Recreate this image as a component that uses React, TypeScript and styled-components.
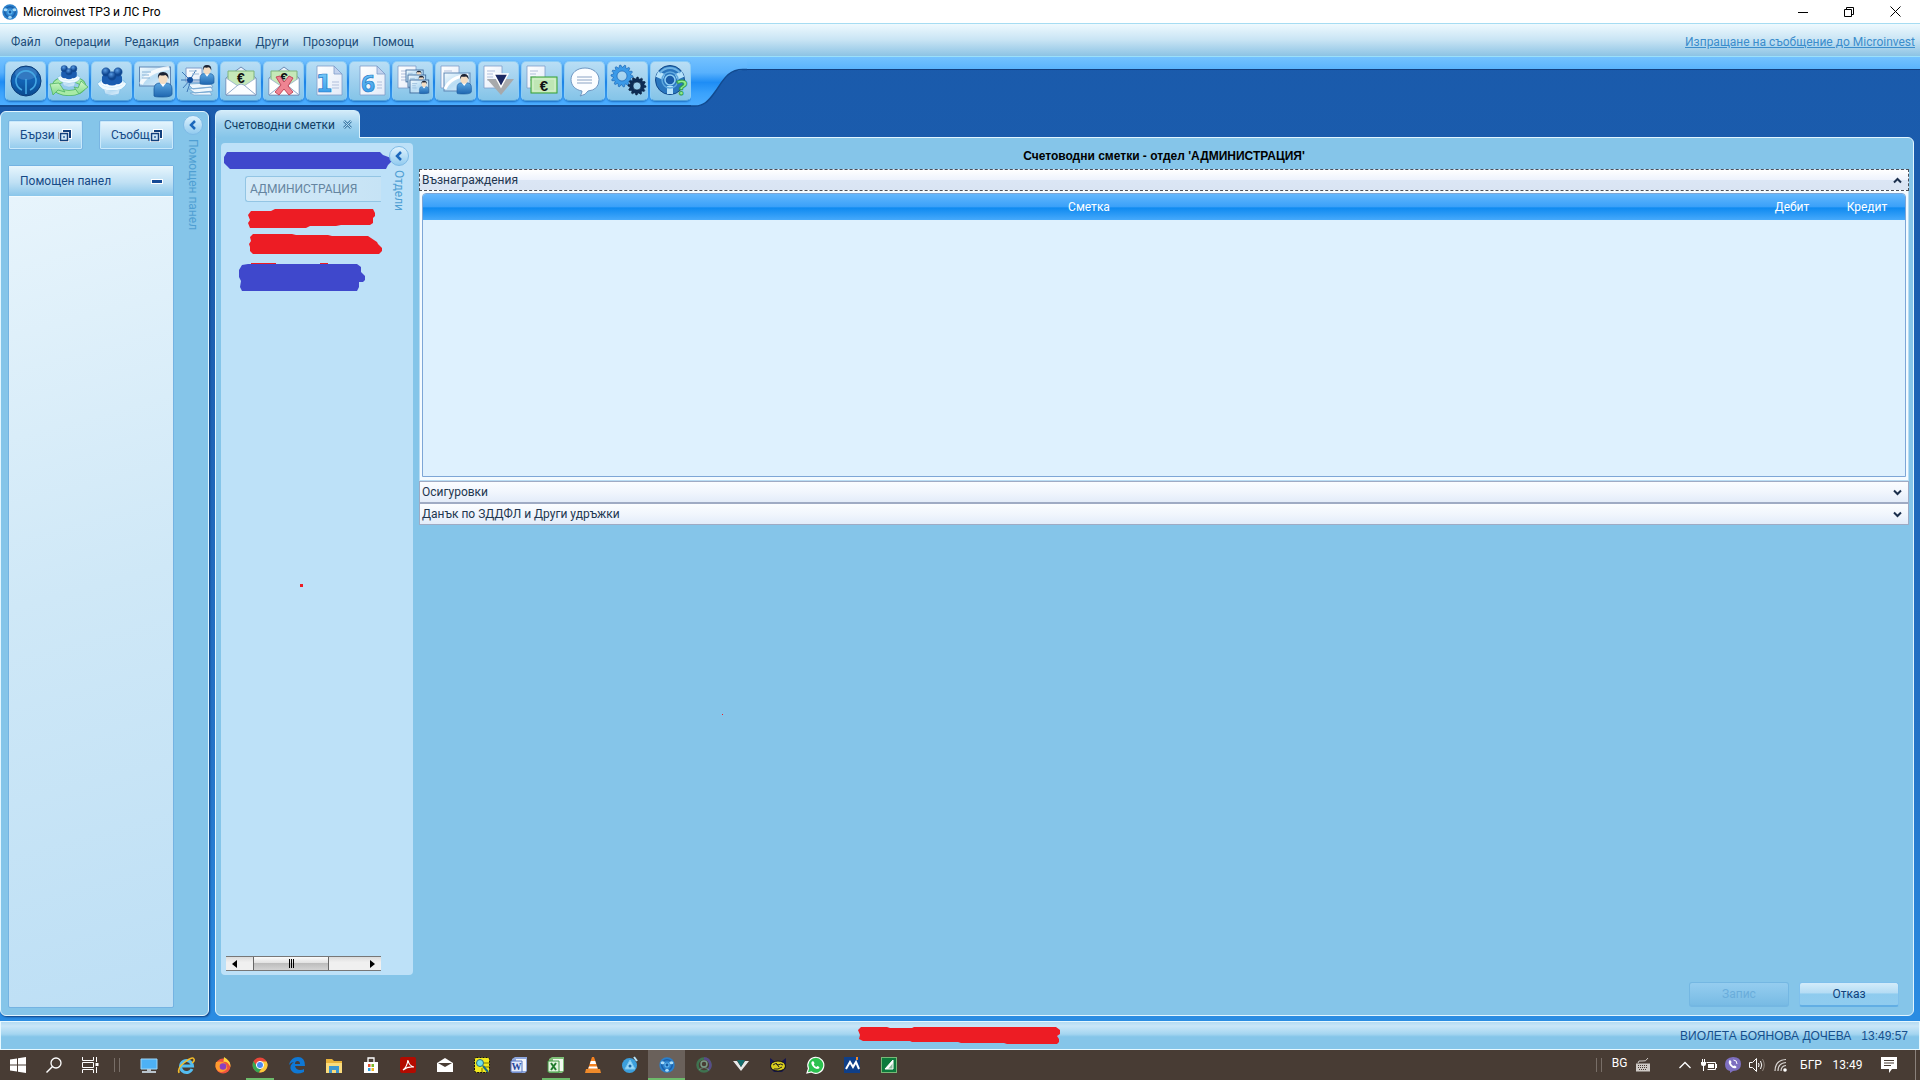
import React, { useState } from "react";
import styled, { createGlobalStyle, css } from "styled-components";

const ui = `Roboto, "Open Sans", "Noto Sans", sans-serif`;

const Global = createGlobalStyle`
  * { box-sizing: border-box; }
  html, body, #root { height: 100%; margin: 0; }
  body { font: 12px/16px ${ui}; color: #1d4a73; overflow: hidden; }
  button { font: inherit; color: inherit; padding: 0; margin: 0; cursor: default; }
  svg { display: block; flex: none; overflow: visible; }
`;

const Shell = styled.div`
  min-height: 100vh;
  display: flex;
  flex-direction: column;
  background: linear-gradient(#1a5aab 0%, #1b5dae 25%, #2474c8 70%, #2a8ce2 94%);
`;

/* ---------- title bar ---------- */
const TitleBar = styled.header`
  display: flex;
  align-items: center;
  height: 23px;
  padding: 0 2px;
  background: #fff;
  color: #000;
`;
const AppTitle = styled.h1`
  flex: 1;
  margin: 0 0 0 5px;
  font-size: 12px;
  line-height: 16px;
  font-weight: 400;
`;
const WindowButton = styled.button`
  width: 46px;
  height: 22px;
  display: grid;
  place-items: center;
  border: 0;
  background: none;
`;

/* ---------- menu ---------- */
const MenuBar = styled.nav`
  display: flex;
  align-items: center;
  gap: 14px;
  height: 34px;
  padding: 3px 5px 0 11px;
  border-top: 1px solid #a6dcf2;
  border-bottom: 1px solid #9be0fb;
  background: linear-gradient(#eef9fe, #c8e4f4 50%, #8cc3e4);
`;
const MenuItem = styled.button`
  border: 0;
  background: none;
  color: #1f4e79;
`;
const SupportLink = styled.a`
  margin-left: auto;
  color: #3b8dcc;
  text-decoration: underline;
`;

/* ---------- toolbar ---------- */
const ToolbarRow = styled.div`
  display: flex;
  height: 50px;
`;
const ToolGroup = styled.div`
  display: flex;
  gap: 2px;
  padding: 4px 0 0 5px;
  background: linear-gradient(#74c2ff, #58b1fd 32%, #1e8df5 52%, #3aa2fc 74%, #4cadff);
  border-bottom: 2px solid #114a90;
`;
const ToolButton = styled.button`
  width: 41px;
  height: 40px;
  display: grid;
  place-items: center;
  border: 1px solid #8ccdf6;
  border-bottom-color: #4f9fd8;
  border-radius: 5px;
  background: linear-gradient(#b9def5, #9fd0ee 50%, #84c4e8);
  box-shadow: 0 1px 2px #1c6fc4;
`;
const ToolStrip = styled.div`
  flex: 1;
  height: 13px;
  background: linear-gradient(#74c2ff, #5ab3fd);
  border-bottom: 1px solid #123f80;
`;

/* ---------- workspace ---------- */
const Workspace = styled.main`
  flex: 1;
  display: flex;
  gap: 6px;
  padding: 3px 6px 5px 0;
`;
const SidePanel = styled.aside`
  width: 209px;
  margin-top: 1px;
  display: flex;
  border: 1px solid #e2f6ff;
  border-radius: 6px;
  background: #85c5e9;
  box-shadow: 1px 1px 2px #0d3f80;
`;
const SideMain = styled.div`
  width: 173px;
  padding: 8px 0 7px 7px;
  display: flex;
  flex-direction: column;
  gap: 15px;
`;
const SideButtons = styled.div`
  display: flex;
  justify-content: space-between;
`;
const SideButton = styled.button`
  width: 75px;
  height: 30px;
  padding: 0 10px 0 11px;
  display: flex;
  align-items: center;
  border: 1px solid #79b5e2;
  border-radius: 2px;
  background: linear-gradient(#e6f5fd, #c4e3f6 50%, #93cbed);
  box-shadow: inset 0 0 0 1px #c9e9fb;
  color: #164a86;
`;
const SideLabel = styled.span`
  width: 39px;
  white-space: nowrap;
  text-align: left;
`;
const Group = styled.section`
  flex: 1;
  display: flex;
  flex-direction: column;
  border: 1px solid #74b3e2;
  border-radius: 2px;
  background: linear-gradient(165deg, #e9f5fc, #cfe8f7 50%, #bddff5);
`;
const GroupHead = styled.header`
  display: flex;
  align-items: center;
  justify-content: space-between;
  height: 31px;
  padding: 0 10px 0 11px;
  border-bottom: 1px solid #f2fbff;
  background: linear-gradient(#e8f6fd, #bfe0f4 55%, #8ac6ea);
  color: #164a86;
`;
const GroupTitle = styled.h2`
  margin: 0;
  font-size: 12px;
  line-height: 16px;
  font-weight: 400;
`;
const MinusButton = styled.button`
  width: 12px;
  height: 5px;
  border: 1px solid #fff;
  background: #164a96;
`;
const Rail = styled.div`
  flex: 1;
  display: flex;
  flex-direction: column;
  align-items: center;
  gap: 4px;
  padding: 3px 0 0 3px;
`;
const RoundButton = styled.button`
  width: 20px;
  height: 20px;
  display: grid;
  place-items: center;
  border: 1px solid #7fbbe6;
  border-radius: 50%;
  background: linear-gradient(#dff2fd, #92cbef);
  z-index: 1;
`;
const RailLabel = styled.span`
  writing-mode: vertical-rl;
  color: #4f9fd3;
`;

const Content = styled.div`
  flex: 1;
  min-width: 0;
  display: flex;
  flex-direction: column;
`;
const Tab = styled.div`
  align-self: flex-start;
  display: flex;
  align-items: center;
  gap: 8px;
  height: 28px;
  margin-bottom: -1px;
  padding: 0 7px 0 8px;
  border: 1px solid #d4effc;
  border-bottom: 0;
  border-radius: 6px 6px 0 0;
  background: linear-gradient(#d3ebf9, #a0d2ef 50%, #85c5e9);
  color: #123f66;
  z-index: 1;
`;
const TabClose = styled.button`
  border: 0;
  background: none;
`;
const Document = styled.section`
  flex: 1;
  position: relative;
  display: flex;
  gap: 6px;
  padding: 5px 4px 8px 5px;
  border: 1px solid #e2f6ff;
  border-radius: 0 6px 6px 6px;
  background: #85c5e9;
`;
const TreePanel = styled.div`
  width: 192px;
  margin-bottom: 32px;
  display: flex;
  border-radius: 4px;
  background: #bde1f8;
`;
const TreeColumn = styled.div`
  width: 160px;
  padding: 9px 0 4px 3px;
  display: flex;
  flex-direction: column;
  justify-content: space-between;
`;
const Tree = styled.ul`
  margin: 0;
  padding: 0;
  list-style: none;
  display: flex;
  flex-direction: column;
  gap: 6px;
`;
const TreeRow = styled.li<{ $indent: number }>`
  padding-left: ${(p) => p.$indent}px;
`;
const TreeNode = styled.button`
  width: 100%;
  height: 26px;
  padding-left: 4px;
  border: 1px solid #93c5e4;
  border-right: 0;
  border-radius: 3px 0 0 3px;
  background: linear-gradient(90deg, #d4eaf8, #c6e3f5);
  color: #6585a0;
  text-align: left;
`;
const ScrollTrack = styled.div`
  display: flex;
  align-items: center;
  height: 15px;
  margin-left: 2px;
  border-top: 1px solid #777;
  border-bottom: 1px solid #777;
  background: linear-gradient(#dcdcdc, #f0f0f0 40%);
`;
const ScrollArrow = styled.button<{ $w: number }>`
  width: ${(p) => p.$w}px;
  height: 13px;
  display: flex;
  align-items: center;
  justify-content: ${(p) => (p.$w > 30 ? "flex-end" : "flex-start")};
  padding: 0 6px;
  border: 0;
  background: none;
`;
const ScrollThumb = styled.div`
  flex: 1;
  height: 13px;
  display: flex;
  align-items: center;
  justify-content: center;
  gap: 1px;
  border: 1px solid #666;
  border-width: 0 1px;
  background: linear-gradient(#fafafa, #e2e2e2 45%, #bdbdbd 50%, #d4d4d4);
`;
const Grip = styled.i`
  width: 1px;
  height: 9px;
  background: #000;
`;

const Form = styled.div`
  flex: 1;
  display: flex;
  flex-direction: column;
`;
const FormTitle = styled.h2`
  margin: 5px 0;
  font: 700 12px/16px "Liberation Sans", Arial, sans-serif;
  text-align: center;
  color: #000;
`;
const ExpanderHead = styled.button<{ $open: boolean }>`
  display: flex;
  align-items: center;
  justify-content: space-between;
  width: 100%;
  height: 22px;
  padding: 0 6px 0 2px;
  border: 1px solid #9fabc4;
  background: linear-gradient(#fbfdff, #f1f6fd 50%, #e3ecf9);
  color: #22364f;
  ${(p) =>
    p.$open &&
    css`
      border: 1px dashed #4a4f58;
      background: linear-gradient(#fff, #eef3fd 49%, #dbe6f5 50%, #d9e4f3);
    `}
`;
const ExpanderBody = styled.div`
  height: 290px;
  padding: 2px 2px 3px;
  border: 1px solid #b9dcf3;
  border-top: 0;
  background: #f4fbff;
`;
const TableFrame = styled.div`
  height: 100%;
  border: 1px solid #7da6d6;
  border-radius: 4px 4px 0 0;
  overflow: hidden;
  background: #def1fe;
`;
const Table = styled.table`
  width: 100%;
  table-layout: fixed;
  border-collapse: collapse;
`;
const HeadCell = styled.th<{ $w?: number }>`
  width: ${(p) => (p.$w ? `${p.$w}px` : "auto")};
  height: 26px;
  padding: 0;
  font-weight: 400;
  color: #fff;
  background: linear-gradient(#63b7fc, #3ba1f9 48%, #0f8af0 54%, #46a9fb);
`;
const Actions = styled.div`
  display: flex;
  justify-content: flex-end;
  gap: 10px;
  margin-top: auto;
  padding: 0 10px 0 0;
`;
const ActionButton = styled.button`
  width: 100px;
  height: 25px;
  border: 1px solid #7fc0ec;
  border-bottom: 2px solid #62aee4;
  border-radius: 3px;
  background: linear-gradient(#d4ecfa, #b4dcf4 45%, #8ecbee 50%, #90ccef);
  color: #0f427c;
  &:disabled {
    border-color: #74b7e2;
    background: linear-gradient(#95cdef, #78bbe4);
    color: #6aaddb;
  }
`;
const Speck = styled.i<{ $x: number; $y: number; $s: number }>`
  position: absolute;
  left: ${(p) => p.$x}px;
  top: ${(p) => p.$y}px;
  width: ${(p) => p.$s}px;
  height: ${(p) => p.$s}px;
  background: #ed1c24;
`;

/* ---------- status bar ---------- */
const StatusBar = styled.footer`
  display: grid;
  grid-template-columns: 1fr auto 1fr;
  align-items: center;
  height: 29px;
  padding: 0 11px 0 9px;
  border: 1px solid #e6f8ff;
  background: linear-gradient(#b4dbf2, #c9e6f8 15%, #a4d5f0 45%, #85c5e9 55%);
  color: #164f8c;
  font: 12px/16px "Liberation Sans", Arial, sans-serif;
`;
const StatusUser = styled.div`
  grid-column: 3;
  justify-self: end;
  display: flex;
  gap: 10px;
`;

/* ---------- taskbar ---------- */
const TaskBar = styled.footer`
  display: flex;
  align-items: stretch;
  height: 30px;
  background: #483c34;
  color: #fff;
`;
const TaskItem = styled.button<{ $w?: number; $state?: string }>`
  width: ${(p) => p.$w ?? 37}px;
  display: grid;
  place-items: center;
  border: 0;
  background: ${(p) => (p.$state === "active" ? "#6a615b" : "none")};
  ${(p) =>
    p.$state === "active" && css`box-shadow: inset 0 -2px #6dbb6b;`}
  ${(p) =>
    p.$state === "open" &&
    css`background: linear-gradient(#6dbb6b, #6dbb6b) center bottom / 28px 2px no-repeat;`}
`;
const Divider = styled.i<{ $w: number }>`
  width: ${(p) => p.$w}px;
  display: flex;
  align-items: center;
  &::before {
    content: "";
    width: 4px;
    height: 14px;
    margin-left: 6px;
    border: 1px solid #786e67;
    border-width: 0 1px;
  }
`;
const Tray = styled.div`
  display: flex;
  margin-left: auto;
`;
const TrayItem = styled.button<{ $w: number; $after?: number }>`
  width: ${(p) => p.$w}px;
  margin-right: ${(p) => p.$after ?? 0}px;
  display: grid;
  place-items: center;
  border: 0;
  background: none;
`;
const TrayLang = styled(TrayItem)`
  height: 25px;
`;
const ShowDesktop = styled.button`
  width: 5px;
  border: 0;
  border-left: 1px solid #8a817b;
  background: none;
`;

/* ---------- drawings ---------- */
const Sv = ({ s = 32, children }: { s?: number; children: React.ReactNode }) => (
  <svg width={s} height={s} viewBox={`0 0 ${s} ${s}`} aria-hidden="true">{children}</svg>
);

const Person = ({ x, y, k = 1 }: { x: number; y: number; k?: number }) => (
  <g transform={`translate(${x} ${y}) scale(${k})`}>
    <path d="M0 24V17q0-6 6-6h6q6 0 6 6v5q0 3-9 3T0 24z" fill="url(#suit)" stroke="#1c5da0" strokeWidth=".8" />
    <path d="M6 11l3 4 3-4z" fill="#fff" />
    <ellipse cx="9" cy="6.5" rx="4.6" ry="5.6" fill="#f3dcc2" />
    <path d="M4 7q-1-7 5-7t5.500 7q-1-3-3-4-4 1-5.500 0-1.500 1-2 4z" fill="#1b2233" />
  </g>
);
const Meeting = () => (
  <g>
    <path d="M7 20h18l-2 8q-7 3-14 0z" fill="url(#glass)" stroke="#77b8e4" strokeWidth=".6" />
    <ellipse cx="16" cy="18" rx="14" ry="6" fill="#cdeafb" stroke="#7fbfe8" />
    <ellipse cx="16" cy="17" rx="11" ry="4" fill="#f8fdff" />
    <path d="M6 16V11q1-3 4-3h12q3 0 4 3v5q-3 3-5 2-5 3-10 0-3 1-5-2z" fill="#1a5cb0" />
    {[[10, 6], [22, 6], [16, 10]].map(([cx, cy]) => (
      <circle key={cx} cx={cx} cy={cy} r="4.200" fill="url(#ball)" stroke="#124a96" strokeWidth=".5" />
    ))}
    <path d="M3 17q2 6 13 6t13-6" fill="none" stroke="#effaff" strokeWidth="2.500" />
  </g>
);
const Sheet = ({ x = 7, y = 2, w = 21, h = 28 }) => (
  <g>
    <path d={`M${x} ${y}h${w - 8}l8 8v${h - 8}h-${w}z`} fill="url(#paper)" stroke="#7f9cc9" strokeWidth=".8" />
    <path d={`M${x + w - 8} ${y}v8h8z`} fill="#c2d2ee" stroke="#7f9cc9" strokeWidth=".8" />
  </g>
);
const Plain = () => (
  <g>
    <path d="M1 1h18v22H1z" fill="url(#paper)" stroke="#7f9cc9" strokeWidth=".8" />
    <path d="M4 6h8M4 9h6M4 12h6M4 15h5" stroke="#b1bfdb" />
  </g>
);
const Envelope = () => (
  <g>
    <path d="M1 13L16 2l15 11v17H1z" fill="#e9f1fa" stroke="#6f8cb5" />
    <path d="M3 6h26v12l-9 5h-8l-9-5z" fill="#c5e8b8" stroke="#7eb47c" />
    <path d="M1 13l12 8L1 30zM31 13l-12 8 12 9z" fill="#fff" stroke="#8aa5c8" strokeWidth=".7" />
    <path d="M1 30l12-10q3-2 6 0l12 10z" fill="#fbfdff" stroke="#7e9bc0" strokeWidth=".8" />
    <text x="16" y="18" fontSize="14" fontWeight="700" textAnchor="middle" fill="#111" fontFamily="Liberation Sans">€</text>
  </g>
);
const Card = ({ x, y, k = 1 }: { x: number; y: number; k?: number }) => (
  <g transform={`translate(${x} ${y}) scale(${k})`}>
    <rect width="26" height="18" fill="url(#glass)" stroke="#3f6c9e" strokeWidth="1.300" />
    <path d="M3 5h7M3 8h5M3 11h6" stroke="#8db4d6" fill="none" />
    <Person x={13} y={1} k={0.72} />
  </g>
);
const gearPath = (cx: number, cy: number, r: number, n: number) => {
  const pts: string[] = [];
  for (let i = 0; i < n * 4; i++) {
    const a = (Math.PI * 2 * i) / (n * 4);
    const q = i % 4 < 2 ? r : r * 0.8;
    pts.push(`${(cx + q * Math.cos(a)).toFixed(2)} ${(cy + q * Math.sin(a)).toFixed(2)}`);
  }
  return `M${pts.join("L")}z`;
};

const DefsSvg = styled.svg`
  position: absolute;
`;
const Defs = () => (
  <DefsSvg width="0" height="0" aria-hidden="true">
    <defs>
      <linearGradient id="suit" x2="0" y2="1"><stop stopColor="#5aa5e0" /><stop offset="1" stopColor="#1f66b0" /></linearGradient>
      <linearGradient id="glass" x2="1" y2="1"><stop stopColor="#f4fbff" /><stop offset=".5" stopColor="#b9dcf3" /><stop offset="1" stopColor="#e3f3fd" /></linearGradient>
      <linearGradient id="paper" x2="1" y2="1"><stop stopColor="#fff" /><stop offset="1" stopColor="#e3ebf8" /></linearGradient>
      <linearGradient id="digit" x2="0" y2="1"><stop stopColor="#7fd0fc" /><stop offset="1" stopColor="#2c92e6" /></linearGradient>
      <linearGradient id="green" x2="0" y2="1"><stop stopColor="#d2f8c8" /><stop offset="1" stopColor="#7fd98a" /></linearGradient>
      <radialGradient id="ball" cx=".4" cy=".3"><stop stopColor="#5a9be2" /><stop offset="1" stopColor="#0f4791" /></radialGradient>
      <linearGradient id="orb" x2="0" y2="1"><stop stopColor="#1a5ba6" /><stop offset=".5" stopColor="#1263b4" /><stop offset="1" stopColor="#0b4a8f" /></linearGradient>
      <linearGradient id="curve" x2="0" y2="1">
        <stop stopColor="#74c2ff" /><stop offset=".32" stopColor="#58b1fd" /><stop offset=".52" stopColor="#1e8df5" />
        <stop offset=".74" stopColor="#3aa2fc" /><stop offset="1" stopColor="#4cadff" />
      </linearGradient>
    </defs>
  </DefsSvg>
);

const tools: [string, React.ReactNode][] = [
  ["Начало", <>
    <circle cx="16" cy="16" r="15" fill="url(#orb)" stroke="#0b3c78" />
    <ellipse cx="16" cy="8.500" rx="11" ry="6.500" fill="#4a8ed0" opacity=".55" />
    <path d="M12 25A10 10 0 1 1 20 25M16 14v15" fill="none" stroke="#45a8e4" strokeWidth="1.600" />
  </>],
  ["Назначаване", <>
    <ellipse cx="16" cy="21" rx="14" ry="7" fill="none" stroke="#4fb463" strokeWidth="6" />
    <ellipse cx="16" cy="21" rx="14" ry="7" fill="none" stroke="#a9eba6" strokeWidth="4.600" />
    <path d="M-3 19l9-1 6 9-7-2-5 5zM35 22l-9 7-5-7 4 1 3-7z" fill="url(#green)" stroke="#4fb463" strokeWidth=".8" />
    <g transform="translate(3.500 -1) scale(.78)"><Meeting /></g>
  </>],
  ["Служители", <g transform="translate(0 1)"><Meeting /></g>],
  ["Карта на служител", <>
    <rect x=".5" y="2" width="31" height="19" fill="url(#glass)" stroke="#5f87b5" />
    <path d="M2 19Q8 6 30 3" stroke="#fff" strokeWidth="4" fill="none" opacity=".8" />
    <path d="M3 7h9M3 10h7M3 13h8" stroke="#88b2d6" fill="none" />
    <Person x={15} y={7} />
  </>],
  ["Структура", <>
    <path d="M4 3h16v14H4z" fill="url(#paper)" stroke="#7f9cc9" />
    <path d="M6 19l22-1 3 4-20 2zM7 24l22-2 2 4-18 2zM8 28l20-1 2 3H12z" fill="#eef7fd" stroke="#74a5cf" strokeWidth=".8" />
    <path d="M0 7l8 8M-1 15h9M1 23l7-8M5 27l4-12M14 5L8 15h11" stroke="#3f79b8" fill="none" />
    <path d="M7 6h8M10 9h7" stroke="#9dbad8" />
    <circle cx="8" cy="15" r="3" fill="#1550a0" />
    <Person x={18} y={0} k={0.78} />
  </>],
  ["Заплати", <Envelope />],
  ["Анулиране", <>
    <Envelope />
    <path d="M8 12l4-1 4 6 5-6 4 2-5 8 5 6-4 3-5-6-5 6-4-3 6-7z" fill="#ef8492" stroke="#c2495c" />
  </>],
  ["Декларация 1", <>
    <Sheet x={6} y={1} w={25} h={29} />
    <path d="M21 17h7M21 20h7M21 23h7" stroke="#b1bfdb" />
    <text x="13" y="27" fontSize="24" fontWeight="700" textAnchor="middle" fill="url(#digit)" stroke="#2379c6" strokeWidth=".7" fontFamily="DejaVu Sans">1</text>
  </>],
  ["Декларация 6", <>
    <Sheet x={6} y={1} w={25} h={29} />
    <path d="M23 17h5M23 20h5M23 23h5" stroke="#b1bfdb" />
    <text x="14" y="27" fontSize="24" fontWeight="700" textAnchor="middle" fill="url(#digit)" stroke="#2379c6" strokeWidth=".7" fontFamily="Open Sans">6</text>
  </>],
  ["Ведомост", <>
    <Plain />
    <Card x={9} y={5} k={0.66} /><Card x={11} y={10} k={0.68} /><Card x={13} y={15} k={0.72} />
  </>],
  ["Фиш", <>
    <Plain />
    <rect x="4" y="8" width="26" height="18" fill="url(#glass)" stroke="#5f87b5" />
    <path d="M5 24Q10 12 28 10" stroke="#fff" strokeWidth="3" fill="none" />
    <Person x={17} y={9} k={0.8} />
  </>],
  ["Експорт", <>
    <Plain />
    <path d="M4 14h27L18 30z" fill="#a7a9ab" />
    <path d="M11 9h14l-7 13z" fill="#1c2a63" stroke="#fff" strokeWidth="1.500" />
  </>],
  ["Плащания", <>
    <Plain />
    <rect x="5" y="12" width="26" height="16" fill="#bfe6b4" stroke="#35a035" />
    <rect x="7" y="14" width="22" height="12" fill="none" stroke="#d9f3d2" />
    <text x="18" y="26" fontSize="15" fontWeight="700" textAnchor="middle" fill="#111" fontFamily="Liberation Sans">€</text>
  </>],
  ["Съобщение", <>
    <path d="M16 3C8 3 2 8 2 14.500S7 25 13 26q0 3-2 5 6-1 8-5 11-1 11-11.500C30 8 24 3 16 3z" fill="#fbfdff" stroke="#6f97c2" />
    <path d="M8 12h15M8 15h15M8 18h15" stroke="#8aa3c4" />
  </>],
  ["Настройки", <>
    <path fillRule="evenodd" d={`${gearPath(10, 11, 11, 14)}M15 11a5 5 0 1 0-10 0 5 5 0 1 0 10 0z`} fill="#3b9ae8" stroke="#1b66b4" strokeWidth=".7" />
    <path fillRule="evenodd" d={`${gearPath(25, 21, 9, 12)}M29 21a4 4 0 1 0-8 0 4 4 0 1 0 8 0z`} fill="#0d2c55" stroke="#071c3a" strokeWidth=".6" />
  </>],
  ["Помощ", <>
    <circle cx="15" cy="15" r="14.500" fill="#2a76be" stroke="#12498a" />
    <path d="M2 9l7 3M28 9l-7 3M15 21v8" stroke="#b5e2fa" strokeWidth="6" />
    <path d="M5 8q4-5 10-5t10 5" fill="none" stroke="#6fb3e4" strokeWidth="2" />
    <circle cx="15" cy="15" r="8" fill="none" stroke="#5fa9df" strokeWidth="1.500" />
    <circle cx="15" cy="15" r="5" fill="#1a5ca8" stroke="#8fd0f5" strokeWidth="1.500" />
    <text x="27" y="30" fontSize="22" fontWeight="700" textAnchor="middle" fill="#8fec8f" stroke="#2f9a48" strokeWidth=".9" fontFamily="Open Sans">?</text>
  </>],
];

const Globe = ({ s = 16 }: { s?: number }) => (
  <svg width={s} height={s} viewBox="0 0 16 16" aria-hidden="true">
    <circle cx="8" cy="8" r="7.700" fill="#2a80cc" />
    <circle cx="8" cy="8" r="5.200" fill="none" stroke="#1a5fa8" strokeWidth="1.500" />
    <ellipse cx="3.600" cy="5.800" rx="2" ry="1.500" fill="#a8dcf8" />
    <ellipse cx="12.400" cy="5.800" rx="2" ry="1.500" fill="#a8dcf8" />
    <ellipse cx="8" cy="13.200" rx="1.800" ry="1.500" fill="#a8dcf8" />
    <circle cx="8" cy="8" r="2.600" fill="#5db4ee" /><circle cx="8" cy="8" r="1.400" fill="#175ca6" />
  </svg>
);
const Chevron = ({ dir }: { dir: "up" | "down" }) => (
  <svg width="9" height="7" viewBox="0 0 9 7" aria-hidden="true">
    <path d={dir === "up" ? "M1 5.500L4.500 2 8 5.500" : "M1 1.500L4.500 5 8 1.500"} fill="none" stroke="#1b2f4c" strokeWidth="2" />
  </svg>
);
const Back = () => (
  <svg width="10" height="10" viewBox="0 0 10 10" aria-hidden="true">
    <path d="M7 1L3 5l4 4" fill="none" stroke="#1c68bc" strokeWidth="2.500" />
  </svg>
);
const Popout = () => (
  <svg width="13" height="13" viewBox="0 0 13 13" aria-hidden="true">
    <path d="M3 0h10v10H9V4H3z" fill="#fff" />
    <path d="M4 1h8v8h-2V3H4z" fill="#123f7c" />
    <rect x="1" y="4" width="8" height="8" fill="#fff" stroke="#fff" strokeWidth="2" />
    <rect x="1.500" y="4.500" width="7" height="7" fill="#cfe7f7" stroke="#123f7c" strokeWidth="1.500" />
    <rect x="4" y="7" width="2" height="2" fill="#5a86b8" />
  </svg>
);

const taskIcons: [string, React.ReactNode, string?][] = [
  ["Компютър", <><path d="M1 3h16v10H1z" fill="#4db1f5" stroke="#9cd7fb" /><path d="M7 13h4v2H7zM2 15h14v2H2z" fill="#b9c4cc" /></>],
  ["Internet Explorer", <><path d="M15 13A6 6 0 1 1 15.500 10H5" fill="none" stroke="#54bdf0" strokeWidth="3" /><path d="M2 17Q0 12 8 6t9-3q1 2-2 4" fill="none" stroke="#f3bd2b" strokeWidth="1.500" /></>],
  ["Firefox", <><circle cx="9" cy="10" r="7.500" fill="#f0523f" /><path d="M10 1q7 4 6.500 10-3-6-7-5z" fill="#ffd43c" /><path d="M2 6q3-1 7 0 5 3 4 7-4 5-9 2-4-4-2-9z" fill="#ff9a2e" /><circle cx="9" cy="10.500" r="3.300" fill="#8a3fc0" /></>],
  ["Chrome", <><circle cx="9" cy="9" r="7.500" fill="#e9473a" /><path d="M2.500 5.300A7.500 7.500 0 0 0 8 16.500L11.500 10 6 10.500z" fill="#35a852" /><path d="M9 5.500h6.600A7.500 7.500 0 0 1 8 16.500l4-6z" fill="#fbcb3c" /><circle cx="9" cy="9" r="3.600" fill="#4a8af4" stroke="#fff" /></>, "open"],
  ["Edge", <path d="M1 9Q3 1 10 1t7 9H7q1 4 5 4 3 0 4-1v3q-9 4-13-2-2-5 3-8-3 0-5 3zm6-1h5q0-3-2.500-3T7 8z" fill="#0f78d4" />],
  ["Файлове", <><path d="M1 3h6l2 2h8v12H1z" fill="#e9b33b" /><path d="M1 7h16v10H1z" fill="#fbdc7c" /><path d="M4 10h10v7h-3v-3H7v3H4z" fill="#3f97cf" /></>],
  ["Store", <><path d="M2 6h14v11H2z" fill="#fff" /><path d="M6 6V2h6v4" fill="none" stroke="#fff" strokeWidth="1.300" /><path d="M6 8h2.500v3H6z" fill="#e8502e" /><path d="M9.500 8H12v3H9.500z" fill="#7db928" /><path d="M6 12h2.500v3H6z" fill="#2a9fe0" /><path d="M9.500 12H12v3H9.500z" fill="#f6b620" /></>],
  ["Acrobat", <><rect x="1" y="1" width="16" height="16" rx="2" fill="#b30b00" /><path d="M4 14q4-3 5-10 1 6 6 7-6-1-11 3z" fill="none" stroke="#fff" strokeWidth="1.200" /></>],
  ["Поща", <><path d="M1 7l8-5 8 5v9H1z" fill="#fff" /><path d="M2 7h14l-7 4z" fill="#483c34" /></>],
  ["Търсене на чип", <><rect x="1.500" y="1.500" width="15" height="15" rx="2" fill="#f4ea1d" stroke="#111" strokeDasharray="2 1" /><path d="M11 7h5M11 11h5M9 12v4" stroke="#7a7400" /><circle cx="7" cy="7" r="3.500" fill="#6fe0e8" stroke="#2f6b75" /><path d="M10 10l5 6" stroke="#186a86" strokeWidth="2" /></>],
  ["Word", <><path d="M2 3l3-2h12v14l-2 2H2z" fill="#8ea6dc" /><path d="M6 3h10v12H6z" fill="#f4f7fd" /><path d="M1 5h11v11H1z" fill="#e3eafa" stroke="#5575c0" /><text x="6.500" y="14" fontSize="10" fontWeight="700" fill="#27489c" textAnchor="middle" fontFamily="Liberation Serif">W</text></>],
  ["Excel", <><path d="M2 3l3-2h12v14l-2 2H2z" fill="#7fbf78" /><path d="M6 3h10v12H6z" fill="#f2faf0" /><path d="M1 5h11v11H1z" fill="#e2f4de" stroke="#3f9440" /><path d="M4 7l5 7M9 7l-5 7" stroke="#217a2c" strokeWidth="2" /></>, "open"],
  ["VLC", <><path d="M8 1h2l4 12H4z" fill="#f58220" /><path d="M6.800 5h4.400l1 3H5.800zM5 10.500h8l.6 2H4.300z" fill="#fff" /><path d="M2 13h14l1 4H1z" fill="#f08a2a" /></>],
  ["Делта", <><circle cx="8.500" cy="9.500" r="7.500" fill="#3c9fdc" /><path d="M9 4l5 9H4z" fill="#9bdaf8" stroke="#7cc8f0" /><circle cx="9" cy="10" r="1.500" fill="#1768ae" /><path d="M13 1l3 4" stroke="#b8e5fa" strokeWidth="2" /></>],
  ["Microinvest", <Globe />, "active"],
  ["Монитор", <><circle cx="9" cy="9" r="6.500" fill="none" stroke="#3f7350" strokeWidth="2.500" /><path d="M9 2.500a6.500 6.500 0 0 1 4 11.500" stroke="#594a8a" strokeWidth="2.500" fill="none" /><circle cx="9" cy="8" r="3" fill="none" stroke="#7a9a86" strokeWidth="1.500" /><path d="M4 14q5-5 10 0" fill="none" stroke="#6f8f7c" /></>],
  ["Склад", <><path d="M1 5h4l4 6 4-6h4l-8 10z" fill="#e8e8e8" /><path d="M5 4h8l-4 7z" fill="#146d6d" /></>],
  ["Котка", <><path d="M1 2l4 3h8l4-3v10l-4 4H5l-4-4z" fill="#161650" /><ellipse cx="9" cy="10" rx="7.500" ry="5" fill="#d8cc20" stroke="#111" /><path d="M4 9q3-3 5 0 3-2 5 0M5 13q4 1 8-2M7 7l3 4" stroke="#222" strokeWidth="1" fill="none" /></>],
  ["WhatsApp", <><path d="M1 17l1.500-4.500A8 8 0 1 1 5.500 16z" fill="#2bc14e" stroke="#fff" strokeWidth="1.200" /><path d="M6 5.500q2-1 2.500 2l-.7 1q1 2 2.600 2.500l1-1q3 1 1.600 2.500Q9 14 6.500 10 4.500 7 6 5.500z" fill="#fff" /></>],
  ["Microinvest M", <><rect x="1" y="1" width="16" height="16" fill="#0f3f88" /><path d="M3 13l4-7 3 5 3-5 3 7" fill="none" stroke="#fff" strokeWidth="2" /><path d="M13 1h2v3h-2z" fill="#f08a2a" /></>],
  ["Бележки", <><rect x="1.500" y="1.500" width="15" height="15" fill="#0d7a3c" stroke="#79b877" /><path d="M5 13L13 4v9z" fill="#8fbf9e" stroke="#fff" /><path d="M5 13L13 4v3L8 13z" fill="#fff" /></>],
];

const RED = "#ed1c24";
const BLUE = "#3f48cc";

const Expander = ({ title, initial = false, children }: { title: string; initial?: boolean; children?: React.ReactNode }) => {
  const [open, setOpen] = useState(initial);
  return (
    <>
      <ExpanderHead $open={open} aria-expanded={open} onClick={() => setOpen(!open)}>
        {title}
        <Chevron dir={open ? "up" : "down"} />
      </ExpanderHead>
      {open && children}
    </>
  );
};

export default function App() {
  return (
    <Shell>
      <Global />
      <Defs />
      <TitleBar>
        <Globe />
        <AppTitle>Microinvest ТРЗ и ЛС Pro</AppTitle>
        <WindowButton aria-label="Минимизиране">
          <svg width="10" height="10"><path d="M0 5.500h10" stroke="#000" /></svg>
        </WindowButton>
        <WindowButton aria-label="Възстановяване">
          <svg width="10" height="10"><path d="M.5 2.500h7v7h-7zM2.500 2.500v-2h7v7h-2" fill="none" stroke="#000" /></svg>
        </WindowButton>
        <WindowButton aria-label="Затваряне">
          <svg width="11" height="11"><path d="M.5.500l10 10M10.500.500l-10 10" stroke="#000" /></svg>
        </WindowButton>
      </TitleBar>
      <MenuBar>
        {["Файл", "Операции", "Редакция", "Справки", "Други", "Прозорци", "Помощ"].map((m) => (
          <MenuItem key={m}>{m}</MenuItem>
        ))}
        <SupportLink href="#support">Изпращане на съобщение до Microinvest</SupportLink>
      </MenuBar>
      <ToolbarRow>
        <ToolGroup>
          {tools.map(([name, art]) => (
            <ToolButton key={name} aria-label={name}><Sv>{art}</Sv></ToolButton>
          ))}
        </ToolGroup>
        <svg width="56" height="50" viewBox="0 0 56 50" aria-hidden="true">
          <path d="M0 0H56V13H52C36 13 32 24 24 35 17 45 12 49 4 49H0z" fill="url(#curve)" />
          <path d="M56 12.500H52C36 12.500 32 24 24 35 17 45 12 49 4 49H0" fill="none" stroke="#114a90" strokeWidth="1.500" />
        </svg>
        <ToolStrip />
      </ToolbarRow>

      <Workspace>
        <SidePanel>
          <SideMain>
            <SideButtons>
              <SideButton><SideLabel>Бързи к</SideLabel><Popout /></SideButton>
              <SideButton><SideLabel>Съобще</SideLabel><Popout /></SideButton>
            </SideButtons>
            <Group>
              <GroupHead>
                <GroupTitle>Помощен панел</GroupTitle>
                <MinusButton aria-label="Свиване" />
              </GroupHead>
            </Group>
          </SideMain>
          <Rail>
            <RoundButton aria-label="Скриване на помощния панел"><Back /></RoundButton>
            <RailLabel>Помощен панел</RailLabel>
          </Rail>
        </SidePanel>

        <Content>
          <Tab>
            Счетоводни сметки
            <TabClose aria-label="Затваряне на раздела">
              <svg width="9" height="9"><path d="M1 1l7 7M8 1L1 8" stroke="#4580ab" strokeWidth="2.600" /><path d="M1 1l7 7M8 1L1 8" stroke="#b5dcf2" /></svg>
            </TabClose>
          </Tab>
          <Document>
            <TreePanel>
              <TreeColumn>
                <Tree>
                  <TreeRow $indent={0}>
                    <svg width="157" height="18"><path d="M0 5L3 0H156L159 3 167 6V10L164 13 162 17H6L3 14 0 11z" fill={BLUE} /></svg>
                  </TreeRow>
                  <TreeRow $indent={21}><TreeNode>АДМИНИСТРАЦИЯ</TreeNode></TreeRow>
                  <TreeRow $indent={24}>
                    <svg width="127" height="20"><path d="M0 7L3 3H23L27 1H125L127 5V8L125 10V15L122 17H93L88 18H62L58 20H2L0 15 2 12z" fill={RED} /></svg>
                  </TreeRow>
                  <TreeRow $indent={25}>
                    <svg width="133" height="20"><path d="M1 3L4 0H43L47 1H79L83 2H119L128 8 129 10 133 14V17L130 20H4L1 17V13L0 10 2 7z" fill={RED} /></svg>
                  </TreeRow>
                  <TreeRow $indent={15}>
                    <svg width="127" height="31"><path d="M12 3H37V5H12zM81 3H89V5H81z" fill={RED} /><path d="M0 10L3 5 9 4H118L122 7V12L126 16V20L124 22H120V27L118 31H3L1 27 2 21 0 17z" fill={BLUE} /></svg>
                  </TreeRow>
                </Tree>
                <ScrollTrack>
                  <ScrollArrow $w={27} aria-label="Наляво"><svg width="5" height="8"><path d="M5 0v8L0 4z" /></svg></ScrollArrow>
                  <ScrollThumb><Grip /><Grip /><Grip /></ScrollThumb>
                  <ScrollArrow $w={52} aria-label="Надясно"><svg width="5" height="8"><path d="M0 0v8l5-4z" /></svg></ScrollArrow>
                </ScrollTrack>
              </TreeColumn>
              <Rail>
                <RoundButton aria-label="Скриване на отделите"><Back /></RoundButton>
                <RailLabel>Отдели</RailLabel>
              </Rail>
            </TreePanel>

            <Form>
              <FormTitle>Счетоводни сметки - отдел 'АДМИНИСТРАЦИЯ'</FormTitle>
              <Expander title="Възнаграждения" initial>
                <ExpanderBody>
                  <TableFrame>
                    <Table>
                      <thead>
                        <tr>
                          <HeadCell>Сметка</HeadCell>
                          <HeadCell $w={74}>Дебит</HeadCell>
                          <HeadCell $w={76}>Кредит</HeadCell>
                        </tr>
                      </thead>
                    </Table>
                  </TableFrame>
                </ExpanderBody>
              </Expander>
              <Expander title="Осигуровки" />
              <Expander title="Данък по ЗДДФЛ и Други удръжки" />
              <Actions>
                <ActionButton disabled>Запис</ActionButton>
                <ActionButton>Отказ</ActionButton>
              </Actions>
            </Form>
            <Speck $x={84} $y={446} $s={3} />
            <Speck $x={506} $y={576} $s={1} />
          </Document>
        </Content>
      </Workspace>

      <StatusBar>
        <span />
        <svg width="202" height="17"><path d="M0 3L3 0H29L32 1H54L56 0H198L202 3V7L199 9 201 12V15L199 17H149L146 16H103L100 15H54L52 14H5L1 12 2 8z" fill={RED} /></svg>
        <StatusUser>
          <span>ВИОЛЕТА БОЯНОВА ДОЧЕВА</span>
          <span>13:49:57</span>
        </StatusUser>
      </StatusBar>

      <TaskBar>
        <TaskItem $w={36} aria-label="Старт">
          <svg width="16" height="16"><path d="M0 2.500L7 1.500V7.500H0zM8 1.300L16 0V7.500H8zM0 8.500H7V14.500L0 13.500zM8 8.500H16V16L8 14.800z" fill="#fff" /></svg>
        </TaskItem>
        <TaskItem $w={36} aria-label="Търсене">
          <svg width="16" height="16"><circle cx="10" cy="6" r="5" fill="none" stroke="#fff" strokeWidth="1.300" /><path d="M6.500 9.500L.5 15.500" stroke="#fff" strokeWidth="1.500" /></svg>
        </TaskItem>
        <TaskItem $w={36} aria-label="Изглед на задачите">
          <svg width="17" height="16"><path d="M.5 0v3.500h11V0M.5 16v-3.500h11V16M.5 5.500h11v5H.5zM14.500 0v5M14.500 10v6" fill="none" stroke="#fff" /><path d="M13.500 6h3v3h-3z" fill="#fff" /></svg>
        </TaskItem>
        <Divider $w={22} />
        {taskIcons.map(([name, art, state]) => (
          <TaskItem key={name} aria-label={name} $state={state}>
            {name === "Microinvest" ? art : <Sv s={18}>{art}</Sv>}
          </TaskItem>
        ))}
        <Tray>
          <Divider $w={18} />
          <TrayLang $w={23}>BG</TrayLang>
          <TrayItem $w={24} $after={18} aria-label="Клавиатура">
            <svg width="16" height="14"><path d="M1 5.500h14v8H1z" fill="#cfcac6" /><path d="M3 7.500h10M3 9.500h10M4 11.500h8" stroke="#483c34" strokeDasharray="1 1" /><path d="M3 5q0-3 4-2t6-3" fill="none" stroke="#cfcac6" /></svg>
          </TrayItem>
          <TrayItem $w={24} aria-label="Скрити икони">
            <svg width="12" height="8"><path d="M.5 7L6 1.500 11.500 7" fill="none" stroke="#fff" strokeWidth="1.300" /></svg>
          </TrayItem>
          <TrayItem $w={24} aria-label="Батерия">
            <svg width="16" height="12"><path d="M5.500 3.500h9v7h-8" fill="none" stroke="#fff" /><path d="M7 5h6v4H7zM15 5h1v4h-1zM0 3h5v2q0 2-2 2v5H2V7Q0 7 0 5zM1 0h1v3H1zM3 0h1v3H3z" fill="#fff" /></svg>
          </TrayItem>
          <TrayItem $w={24} aria-label="Viber">
            <svg width="16" height="16"><path d="M8 0q8 0 8 7t-8 7l-3 2v-2Q0 13 0 7t8-7z" fill="#7d6fc0" /><path d="M4 3.500q2-1 2.500 1.500L6 6.500q1 2 2.500 2.500l1-.5q3 1 1.500 2.500Q8 12 5 8.500 3 5.500 4 3.500z" fill="#fff" /><path d="M8.500 3q3.500 0 3.500 4" fill="none" stroke="#fff" /></svg>
          </TrayItem>
          <TrayItem $w={24} aria-label="Звук">
            <svg width="16" height="14"><path d="M.5 4.500h3l4-4v13l-4-4h-3zM9.500 5q1 2 0 4M11.500 3q2.500 4 0 8" fill="none" stroke="#fff" /><path d="M13.500 1q3.500 6 0 12" fill="none" stroke="#91877f" /></svg>
          </TrayItem>
          <TrayItem $w={24} aria-label="Мрежа">
            <svg width="14" height="14"><path d="M1 13Q1 2 12 1.500M4 13Q4 5 12 4.500M7 13Q7 8 12 7.500" fill="none" stroke="#d9d5d2" strokeWidth="1.200" /><circle cx="11" cy="12" r="1.800" fill="#fff" /></svg>
          </TrayItem>
          <TrayItem $w={36}>БГР</TrayItem>
          <TrayItem $w={37}>13:49</TrayItem>
          <TrayItem $w={45} $after={4} aria-label="Известия">
            <svg width="16" height="16"><path d="M0 0h16v12h-5l-3 4v-4H0z" fill="#fff" /><path d="M3 3.500h10M3 6h10M3 8.500h7" stroke="#483c34" /></svg>
          </TrayItem>
          <ShowDesktop aria-label="Показване на работния плот" />
        </Tray>
      </TaskBar>
    </Shell>
  );
}
